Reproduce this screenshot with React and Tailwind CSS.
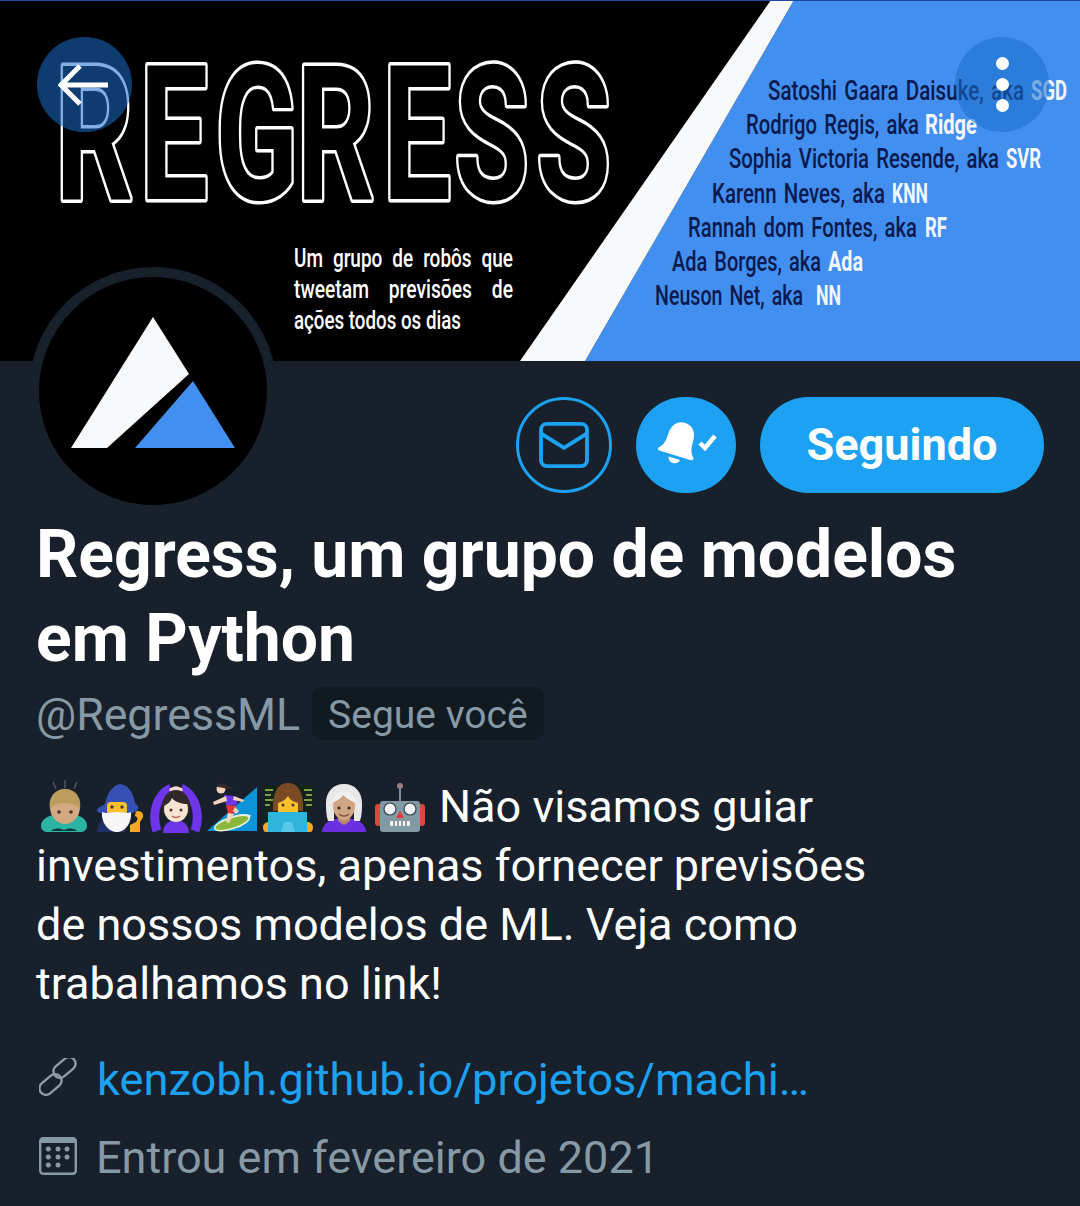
// Twitter profile header for @RegressML

const team = [
    { name: 'Satoshi Gaara Daisuke, aka', aka: 'SGD', x: 768, nameEnd: 1024, akaX: 1031, end: 1067 },
    { name: 'Rodrigo Regis, aka', aka: 'Ridge', x: 746, nameEnd: 919, akaX: 925, end: 977 },
    { name: 'Sophia Victoria Resende, aka', aka: 'SVR', x: 729, nameEnd: 999, akaX: 1006, end: 1041 },
    { name: 'Karenn Neves, aka', aka: 'KNN', x: 712, nameEnd: 885, akaX: 892, end: 928 },
    { name: 'Rannah dom Fontes, aka', aka: 'RF', x: 688, nameEnd: 917, akaX: 925, end: 947 },
    { name: 'Ada Borges, aka', aka: 'Ada', x: 672, nameEnd: 821, akaX: 828, end: 863 },
    { name: 'Neuson Net, aka', aka: 'NN', x: 655, nameEnd: 803, akaX: 816, end: 841 },
];

function Banner() {
    return (
        <svg className="block h-[361px] w-full" viewBox="0 0 1080 361">
            <rect width="1080" height="361" fill="#000" />
            <polygon points="794,0 1080,0 1080,361 585,361" fill="#428ff0" />
            <polygon points="771,0 794,0 585,361 520,361" fill="#f8f9fa" />
            <rect width="1080" height="1" fill="#1f4a9a" />
            {/* letter x positions are divided by the 0.65 squash, stroke painted under the fill */}
            <text
                transform="scale(0.65 1)"
                x="85 215 331 456 589 699 825"
                y="198.500"
                fontSize="187"
                fontWeight="700"
                fill="#000"
                stroke="#fff"
                strokeWidth="7"
                strokeLinejoin="round"
                paintOrder="stroke"
            >
                REGRESS
            </text>
            {/* condensed look: small font size stretched upwards */}
            <g transform="scale(1 1.39)" fill="#fff" fontSize="18" fontWeight="500">
                <text x="294" y="192" textLength="219" lengthAdjust="spacingAndGlyphs" className="[word-spacing:5px]">
                    Um grupo de robôs que
                </text>
                <text x="294" y="214.400" textLength="219" lengthAdjust="spacingAndGlyphs" className="[word-spacing:14px]">
                    tweetam previsões de
                </text>
                <text x="294" y="236.700" textLength="167" lengthAdjust="spacingAndGlyphs">
                    ações todos os dias
                </text>
            </g>
            <g transform="scale(1 1.47)" fontSize="19" fontWeight="500">
                {team.map((t, i) => (
                    <g key={t.aka}>
                        <text x={t.x} y={(100 + i * 34.2) / 1.47} textLength={t.nameEnd - t.x} lengthAdjust="spacingAndGlyphs" fill="#0a1a4f" className="[word-spacing:2px]">
                            {t.name}
                        </text>
                        <text x={t.akaX} y={(100 + i * 34.2) / 1.47} textLength={t.end - t.akaX} lengthAdjust="spacingAndGlyphs" fill="#f4f8fe" fontWeight="700">
                            {t.aka}
                        </text>
                    </g>
                ))}
            </g>
        </svg>
    );
}

function Avatar() {
    return (
        <div className="absolute left-[29px] top-[267px] h-[248px] w-[248px] rounded-full border-[10px] border-[#17202b] bg-black">
            <svg className="h-full w-full" viewBox="39 277 228 228">
                <polygon points="153,317 189,374 107,448 71,448" fill="#f8f9fa" />
                <polygon points="193,381 235,448 135,448" fill="#428ff0" />
            </svg>
        </div>
    );
}

function BowingMan() {
    return (
        <svg className="h-[56px] w-[56px] shrink-0" viewBox="0 0 56 56">
            <path d="M16 3l3 7M28 1v8M40 3l-3 7" stroke="#4a5560" strokeWidth="1.6" fill="none" />
            <path d="M4 47c0-7 8-11 14-11h19c6 0 13 4 13 11 0 4-3 6-7 6H11c-4 0-7-2-7-6z" fill="#2bb3a3" />
            <path d="M14 52c3-3 8-3 13-1 5-2 10-2 13 1z" fill="#0b3a38" />
            <ellipse cx="28" cy="28" rx="15" ry="17" fill="#d3a981" />
            <path d="M13 30c-2-12 5-20 15-20s17 8 15 20c-3-4-8-6-15-6s-12 2-15 6z" fill="#bd9d5e" />
            <circle cx="22" cy="33" r="1.8" fill="#4a3428" />
            <circle cx="34" cy="33" r="1.8" fill="#4a3428" />
        </svg>
    );
}

function Mage() {
    return (
        <svg className="h-[56px] w-[56px] shrink-0" viewBox="0 0 56 56">
            <path d="M4 53c0-8 4-13 10-13h18v13z" fill="#1f2f6b" />
            <path d="M4 31c1-3 5-4 8-6 2-10 7-19 15-20 8 1 13 8 15 19 2 2 4 4 3 6-1 3-5 4-8 4H10c-4 0-7-1-6-3z" fill="#3650b5" />
            <rect x="14" y="23" width="20" height="13" rx="4" fill="#fbc02d" />
            <circle cx="19" cy="28" r="1.7" fill="#4e342e" />
            <circle cx="29" cy="28" r="1.7" fill="#4e342e" />
            <path d="M9 33c5 2 9 0 15 0s10 2 14 0c1 10-5 20-14 20S8 43 9 33z" fill="#f7f7f7" />
            <path d="M45 32c4 0 7 4 4 8l-2 3v10h-10v-7l6-3c2-2 2-5-1-6 0-3 1-5 3-5z" fill="#f4a81d" />
        </svg>
    );
}

function WomanOk() {
    return (
        <svg className="h-[56px] w-[56px] shrink-0" viewBox="0 0 56 56">
            <path d="M8 52C2 34 8 16 22 9M46 52c6-18 0-36-14-43" stroke="#6f35e8" strokeWidth="9" fill="none" />
            <path d="M20 11c4-5 10-5 14 0l-3 3h-8z" fill="#f2dcc9" />
            <path d="M14 54c0-8 6-13 13-13s13 5 13 13z" fill="#6f35e8" />
            <ellipse cx="27" cy="27" rx="14" ry="16" fill="#2f2729" />
            <ellipse cx="27" cy="30" rx="12" ry="13" fill="#f7e3d3" />
            <path d="M15 27c1-8 6-12 12-12s10 3 12 10c-6 0-13-2-16-6-1 3-4 6-8 8z" fill="#2f2729" />
            <circle cx="22" cy="31" r="1.5" fill="#3a2c2a" />
            <circle cx="32" cy="31" r="1.5" fill="#3a2c2a" />
            <path d="M23 37c2 2 6 2 8 0" stroke="#b5654f" strokeWidth="1.3" fill="none" />
        </svg>
    );
}

function Surfer() {
    return (
        <svg className="h-[56px] w-[56px] shrink-0" viewBox="0 0 56 56">
            <polygon points="2,52 52,8 52,52" fill="#0d94d8" />
            <path d="M28 37c8-3 14-2 18-1-2 6-8 12-16 13z" fill="#c5ecfa" />
            <ellipse cx="27" cy="44" rx="18" ry="5.5" transform="rotate(-18 27 44)" fill="#8bb83a" stroke="#eef5dc" strokeWidth="1.5" />
            <path d="M19 16l10 1 4 7-3 3-9-1z" fill="#6f35e8" />
            <path d="M21 26l10 1-2 8-6-1z" fill="#e53935" />
            <path d="M23 34l-2 9 3 1 5-9zM30 28l4 4-3 3-3-3z" fill="#f2d3bc" />
            <path d="M21 17L8 23l1 3 13-4zM29 17l10 4-1 2-10-2z" fill="#f2d3bc" />
            <circle cx="16" cy="10" r="4.5" fill="#f2d3bc" />
            <path d="M12 8c1-4 6-5 9-2l9 3-8 1c-3-1-6-2-10-2z" fill="#33292a" />
        </svg>
    );
}

function Technologist() {
    return (
        <svg className="h-[56px] w-[56px] shrink-0" viewBox="0 0 56 56">
            <rect x="2" y="6" width="50" height="27" fill="#16231a" />
            <path d="M4 11h8M4 16h6M4 21h8M4 26h5M43 11h8M45 16h6M43 21h8M45 26h6" stroke="#9ccc52" strokeWidth="1.6" />
            <path d="M12 32c-1-18 5-28 15-28s16 10 15 28z" fill="#7a4a24" />
            <path d="M17 33v-9c4-1 7-3 10-7 2 4 6 6 10 7v9z" fill="#fbc02d" />
            <circle cx="22" cy="26" r="1.5" fill="#4e342e" />
            <circle cx="32" cy="26" r="1.5" fill="#4e342e" />
            <path d="M2 48c0-3 3-5 6-5v10H5c-2 0-3-2-3-5zM52 48c0-3-3-5-6-5v10h3c2 0 3-2 3-5z" fill="#f9a825" />
            <path d="M7 33h39v20H7z" fill="#2fb4dd" />
            <path d="M20 53l3-10h8l3 10z" fill="#57c9e8" />
        </svg>
    );
}

function ElfWoman() {
    return (
        <svg className="h-[56px] w-[56px] shrink-0" viewBox="0 0 56 56">
            <path d="M5 53c0-8 8-14 22-14s22 6 22 14z" fill="#6a2fe0" />
            <path d="M11 42c-2-6-2-12-2-18C9 13 16 5 27 5s18 8 18 19c0 6 0 12-2 18h-6V22H17v20z" fill="#e8e8e8" />
            <path d="M21 36h12v6l-6 4-6-4z" fill="#b98b68" />
            <ellipse cx="27" cy="27" rx="11" ry="14" fill="#d0a684" />
            <path d="M15 24c2-8 7-12 12-12 6 0 10 4 12 12-5-2-10-5-13-8-2 3-6 6-11 8z" fill="#f0f0f0" />
            <circle cx="22" cy="29" r="1.6" fill="#3e2b20" />
            <circle cx="32" cy="29" r="1.6" fill="#3e2b20" />
            <path d="M22 35c3 2.500 7 2.500 10 0" stroke="#7b4b36" strokeWidth="1.3" fill="none" />
        </svg>
    );
}

function Robot() {
    return (
        <svg className="h-[56px] w-[56px] shrink-0" viewBox="0 0 56 56">
            <circle cx="27" cy="7" r="3" fill="#9e7c7c" />
            <rect x="26" y="9" width="2" height="13" fill="#78909c" />
            <rect x="2" y="25" width="10" height="22" rx="3" fill="#d9483b" />
            <rect x="42" y="25" width="10" height="22" rx="3" fill="#d9483b" />
            <rect x="7" y="22" width="40" height="31" rx="3" fill="#8299a6" />
            <circle cx="17" cy="30" r="6" fill="#f1f3f4" stroke="#37474f" strokeWidth="1.2" />
            <circle cx="37" cy="30" r="6" fill="#f1f3f4" stroke="#37474f" strokeWidth="1.2" />
            <polygon points="27,32 31,39 23,39" fill="#e53935" />
            <rect x="17" y="42" width="20" height="5" rx="1" fill="#f1f3f4" />
            <path d="M21 42v5M25 42v5M29 42v5M33 42v5" stroke="#37474f" strokeWidth="1" />
        </svg>
    );
}

function ChainIcon() {
    return (
        <svg className="mb-[6px] ml-[3px] h-[38px] w-[38px] shrink-0" viewBox="0 0 38 38" fill="none" stroke="#8f9ba6" strokeWidth="2.4">
            <rect x="13" y="3" width="25" height="13" rx="6.500" transform="rotate(-40 25.500 9.500)" />
            <rect x="-1" y="20" width="25" height="13" rx="6.500" transform="rotate(-40 11.500 26.500)" />
        </svg>
    );
}

function CalendarIcon() {
    return (
        <svg className="mb-[3px] ml-[3px] h-[38px] w-[38px] shrink-0" viewBox="0 0 38 38" fill="#8899a6">
            <rect x="1.200" y="1.200" width="35.600" height="35.600" rx="3" fill="none" stroke="#8899a6" strokeWidth="2.4" />
            <rect x="1" y="1" width="36" height="5" rx="2" />
            {[12, 20, 28].map((cy) =>
                [9.300, 19, 28].map((cx) =>
                    cy === 28 && cx === 28 ? null : <circle key={`${cx}-${cy}`} cx={cx} cy={cy} r="2.500" />
                )
            )}
        </svg>
    );
}

export default function App() {
    return (
        <div className="relative min-h-screen overflow-hidden bg-[#17202b] [font-family:Roboto,sans-serif]">
            <Banner />

            {/* buttons over the banner */}
            <button className="absolute left-[37px] top-[37px] flex h-[95px] w-[95px] items-center justify-center rounded-full bg-[#1b6dca]/55">
                <svg className="h-[44px] w-[54px]" viewBox="0 0 54 44" fill="none" stroke="#fff" strokeWidth="5">
                    <path d="M50 22H4M22 3L3 22l19 19" />
                </svg>
            </button>
            <button className="absolute left-[955px] top-[37px] flex h-[95px] w-[94px] flex-col items-center justify-center gap-[8px] rounded-full bg-[#1b6dca]/55">
                <span className="h-[13px] w-[13px] rounded-full bg-white" />
                <span className="h-[13px] w-[13px] rounded-full bg-white" />
                <span className="h-[13px] w-[13px] rounded-full bg-white" />
            </button>

            <Avatar />

            <div className="flex items-center justify-end gap-[24px] pr-[36px] pt-[36px]">
                <button className="flex h-[96px] w-[96px] items-center justify-center rounded-full border-[3px] border-[#1da1f2]">
                    <svg className="h-[46px] w-[50px]" viewBox="0 0 52 48" fill="none" stroke="#1da1f2" strokeWidth="4" strokeLinejoin="round">
                        <rect x="2" y="2" width="48" height="44" rx="6" />
                        <path d="M2 12l24 15 24-15" />
                    </svg>
                </button>
                <button className="flex h-[96px] w-[100px] items-center justify-center rounded-full bg-[#1da1f2]">
                    <svg className="h-[48px] w-[62px]" viewBox="0 0 62 48" fill="#fff">
                        <g transform="translate(4 -2) rotate(17 20 24)">
                            <path d="M20 3c9 0 13 7 13 16 0 6 1 11 5 15 1 1 .5 3-1.500 3H3.500c-2 0-2.500-2-1.500-3 4-4 5-9 5-15C7 10 11 3 20 3z" />
                            <path d="M14 40h12c-.5 3-3 5-6 5s-5.500-2-6-5z" />
                        </g>
                        <path d="M45 22l5 5 10-12" fill="none" stroke="#fff" strokeWidth="4.500" />
                    </svg>
                </button>
                <button className="flex h-[96px] w-[284px] items-center justify-center rounded-full bg-[#1da1f2] text-[45px] font-bold text-white">
                    Seguindo
                </button>
            </div>

            <div className="px-[36px]">
                <h1 className="mt-[20px] max-w-[980px] text-[66px] font-bold leading-[84px] text-white">
                    Regress, um grupo de modelos em Python
                </h1>

                <div className="mt-[6px] flex items-center gap-[12px] text-[#8899a6]">
                    <span className="h-[53px] pt-[4px] text-[44.7px] leading-[49px]">@RegressML</span>
                    <span className="h-[53px] rounded-[10px] bg-[#111921] px-[16px] pt-[4px] text-[39px] leading-[49px]">Segue você</span>
                </div>

                <div className="mt-[37px] max-w-[900px] text-[45px] leading-[59px] text-white">
                    <div className="ml-[1px] flex h-[59px] items-center">
                        <BowingMan />
                        <Mage />
                        <WomanOk />
                        <Surfer />
                        <Technologist />
                        <ElfWoman />
                        <Robot />
                        <span className="ml-[10px]">Não visamos guiar</span>
                    </div>
                    <p>investimentos, apenas fornecer previsões</p>
                    <p>de nossos modelos de ML. Veja como</p>
                    <p>trabalhamos no link!</p>
                </div>

                <div className="mt-[37px] flex items-center gap-[20px] text-[45.2px] leading-[59px]">
                    <ChainIcon />
                    <span className="text-[#1da1f2]">kenzobh.github.io/projetos/machi…</span>
                </div>
                <div className="mt-[19px] flex items-center gap-[19px] text-[45px] leading-[59px] text-[#8899a6]">
                    <CalendarIcon />
                    <span>Entrou em fevereiro de 2021</span>
                </div>
            </div>
        </div>
    );
}
